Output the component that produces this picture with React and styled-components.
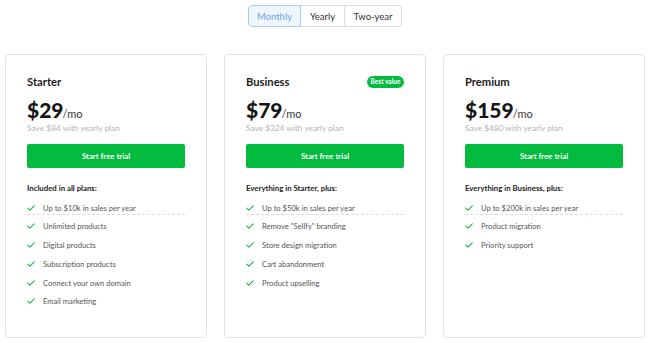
import React from "react";
import styled, { createGlobalStyle } from "styled-components";

const GlobalStyle = createGlobalStyle`
  html, body { margin: 0; padding: 0; background: #ffffff; }
  body { font-family: Lato, "Open Sans", Arial, sans-serif; color: #1a1a1a; }
  * { box-sizing: border-box; }
`;

const Page = styled.div`
  display: flex;
  flex-direction: column;
  align-items: center;
  padding: 5px 5px 0;
  gap: 27px;
`;

const Toggle = styled.div`
  display: flex;
  height: 22px;
`;

const Segment = styled.button`
  font-family: inherit;
  font-size: 9.5px;
  height: 22px;
  width: ${(p) => p.$w}px;
  padding: 0;
  margin: 0;
  cursor: pointer;
  background: ${(p) => (p.$active ? "#eef5fd" : "#ffffff")};
  color: ${(p) => (p.$active ? "#6aa6e6" : "#333333")};
  border: 1px solid ${(p) => (p.$active ? "#a9cdf2" : "#dcdcdc")};
  margin-left: ${(p) => (p.$first ? "0" : "-1px")};
  position: relative;
  z-index: ${(p) => (p.$active ? 1 : 0)};
  border-radius: ${(p) =>
    p.$first ? "4px 0 0 4px" : p.$last ? "0 4px 4px 0" : "0"};
`;

const Cards = styled.div`
  display: grid;
  grid-template-columns: repeat(3, 202px);
  column-gap: 17px;
  width: 100%;
`;

const Card = styled.div`
  height: 284px;
  border: 1px solid #e2e2e2;
  border-radius: 4px;
  padding: 21px 21px;
  display: flex;
  flex-direction: column;
  background: #fff;
`;

const Header = styled.div`
  display: flex;
  justify-content: space-between;
  align-items: center;
  height: 12px;
`;

const PlanName = styled.div`
  font-size: 11.2px;
  font-weight: 700;
  line-height: 12px;
  color: #1c1c1c;
`;

const Badge = styled.span`
  background: #02bb3f;
  color: #fff;
  font-size: 6.5px;
  font-weight: 700;
  line-height: 12px;
  height: 12px;
  width: 37px;
  text-align: center;
  border-radius: 6px;
`;

const PriceLine = styled.div`
  margin-top: 10px;
  line-height: 24px;
  height: 24px;
  white-space: nowrap;
`;

const Amount = styled.span`
  font-size: 21px;
  font-weight: 900;
  color: #161616;
`;

const Per = styled.span`
  font-size: 11px;
  color: #3a3a3a;
  margin-left: -1px;
`;

const Save = styled.div`
  margin-top: 1px;
  font-size: 8.3px;
  line-height: 10px;
  color: #b4b4b4;
`;

const CTA = styled.button`
  margin-top: 11px;
  height: 24px;
  width: 100%;
  border: none;
  border-radius: 2px;
  background: #02bb3f;
  color: #fff;
  font-family: inherit;
  font-size: 7.8px;
  font-weight: 700;
  cursor: pointer;
`;

const IncludesTitle = styled.div`
  margin-top: 15px;
  font-size: 7.8px;
  font-weight: 700;
  line-height: 10px;
  color: #1c1c1c;
`;

const List = styled.ul`
  list-style: none;
  margin: 9px 0 0;
  padding: 0;
  display: flex;
  flex-direction: column;
  gap: 5.8px;
`;

const Item = styled.li`
  display: flex;
  align-items: center;
  gap: 8px;
  height: 13px;
  padding-bottom: 1px;
  font-size: 7.6px;
  line-height: 12px;
  color: #555;
  border-bottom: 1px dashed ${(p) => (p.$underline ? "#dcdcdc" : "transparent")};
`;

const Check = () => (
  <svg width="8" height="6" viewBox="0 0 8 6" fill="none">
    <path
      d="M0.7 3.1 L2.9 5.1 L7.3 0.8"
      stroke="#16b84a"
      strokeWidth="1.1"
      strokeLinecap="round"
      strokeLinejoin="round"
    />
  </svg>
);

const plans = [
  {
    name: "Starter",
    price: "$29",
    save: "Save $84 with yearly plan",
    title: "Included in all plans:",
    features: [
      "Up to $10k in sales per year",
      "Unlimited products",
      "Digital products",
      "Subscription products",
      "Connect your own domain",
      "Email marketing",
    ],
  },
  {
    name: "Business",
    price: "$79",
    badge: "Best value",
    save: "Save $324 with yearly plan",
    title: "Everything in Starter, plus:",
    features: [
      "Up to $50k in sales per year",
      "Remove \"Sellfy\" branding",
      "Store design migration",
      "Cart abandonment",
      "Product upselling",
    ],
  },
  {
    name: "Premium",
    price: "$159",
    save: "Save $480 with yearly plan",
    title: "Everything in Business, plus:",
    features: [
      "Up to $200k in sales per year",
      "Product migration",
      "Priority support",
    ],
  },
];

const periods = [
  { label: "Monthly", w: 53 },
  { label: "Yearly", w: 45 },
  { label: "Two-year", w: 58 },
];

export default function App() {
  return (
    <>
      <GlobalStyle />
      <Page>
        <Toggle>
          {periods.map((p, i) => (
            <Segment
              key={p.label}
              $w={p.w}
              $active={i === 0}
              $first={i === 0}
              $last={i === periods.length - 1}
            >
              {p.label}
            </Segment>
          ))}
        </Toggle>
        <Cards>
          {plans.map((plan) => (
            <Card key={plan.name}>
              <Header>
                <PlanName>{plan.name}</PlanName>
                {plan.badge && <Badge>{plan.badge}</Badge>}
              </Header>
              <PriceLine>
                <Amount>{plan.price}</Amount>
                <Per>/mo</Per>
              </PriceLine>
              <Save>{plan.save}</Save>
              <CTA>Start free trial</CTA>
              <IncludesTitle>{plan.title}</IncludesTitle>
              <List>
                {plan.features.map((f, i) => (
                  <Item key={f} $underline={i === 0}>
                    <Check />
                    {f}
                  </Item>
                ))}
              </List>
            </Card>
          ))}
        </Cards>
      </Page>
    </>
  );
}
